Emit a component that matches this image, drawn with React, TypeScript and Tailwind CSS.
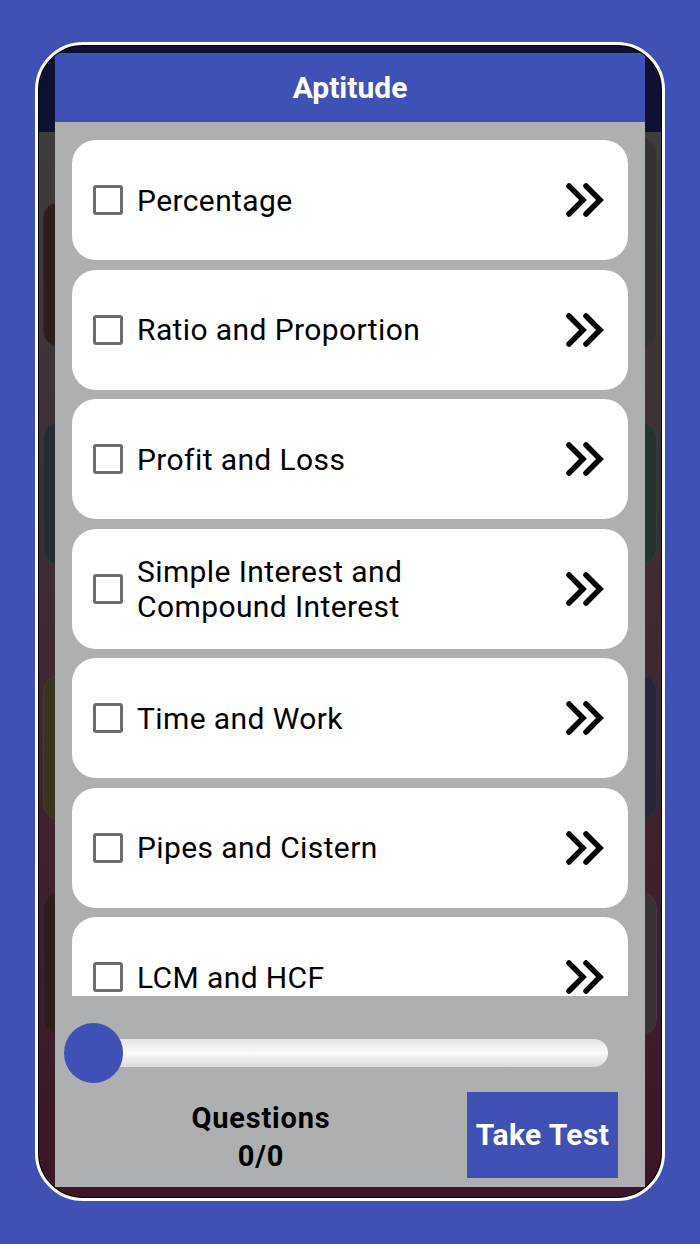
import React from "react";

const topics: string[][] = [
  ["Percentage"],
  ["Ratio and Proportion"],
  ["Profit and Loss"],
  ["Simple Interest and", "Compound Interest"],
  ["Time and Work"],
  ["Pipes and Cistern"],
  ["LCM and HCF"],
  ["Ages"],
];

function DoubleChevron() {
  return (
    <svg width="40" height="36" viewBox="0 0 40 36" fill="none" className="shrink-0">
      <polyline
        points="3,4 17,18 3,32"
        stroke="#000"
        strokeWidth="5.5"
        strokeLinecap="round"
        strokeLinejoin="miter"
      />
      <polyline
        points="20,4 34,18 20,32"
        stroke="#000"
        strokeWidth="5.5"
        strokeLinecap="round"
        strokeLinejoin="miter"
      />
    </svg>
  );
}

function TopicCard({ lines }: { lines: string[] }) {
  return (
    <div className="h-[120px] shrink-0 bg-white rounded-[24px] flex items-center pl-[21px] pr-[22px]">
      <div className="w-[30px] h-[30px] shrink-0 border-[3px] border-[#6d6d6d] rounded-[3px]" />
      <div className="ml-[14px] flex-1 text-[30px] leading-[35px] tracking-[0.4px] text-black">
        {lines.map((l) => (
          <div key={l} className="whitespace-nowrap">
            {l}
          </div>
        ))}
      </div>
      <DoubleChevron />
    </div>
  );
}

function BackdropScreen() {
  return (
    <div className="h-full flex flex-col">
      <div className="h-[86px] bg-[#0e1230]" />
      <div className="flex-1 bg-gradient-to-b from-[#3e3c3d] via-[#3f2831] to-[#3c1628] px-[4px]">
        <div className="flex justify-between">
          <div className="w-[280px] h-[145px] mt-[70px] rounded-[16px] bg-[#2f1d1c] border border-[#3a2624]" />
          <div className="w-[280px] h-[212px] mt-[5px] rounded-[16px] bg-[#353236] border border-[#3d3a3e]" />
        </div>
        <div className="flex justify-between mt-[73px]">
          <div className="w-[280px] h-[143px] rounded-[16px] bg-[#232c31] border border-[#2e393d]" />
          <div className="w-[280px] h-[143px] rounded-[16px] bg-[#243431] border border-[#2d403b]" />
        </div>
        <div className="flex justify-between mt-[110px]">
          <div className="w-[280px] h-[145px] rounded-[16px] bg-[#39331f] border border-[#453e27]" />
          <div className="w-[280px] h-[145px] rounded-[16px] bg-[#26263a] border border-[#303046]" />
        </div>
        <div className="flex justify-between mt-[72px]">
          <div className="w-[280px] h-[143px] rounded-[16px] bg-[#2e1d1c] border border-[#3a2725]" />
          <div className="w-[280px] h-[143px] rounded-[16px] bg-[#363236] border border-[#403c40]" />
        </div>
      </div>
    </div>
  );
}

export default function App() {
  return (
    <div
      className="w-[700px] h-[1244px] bg-[#3f51b5] flex justify-center pt-[42px]"
      style={{ fontFamily: "Roboto, 'Noto Sans', sans-serif" }}
    >
      <div className="w-[630px] h-[1159px] rounded-[48px] border-[3px] border-white bg-black p-[1px]">
        <div className="relative w-full h-full rounded-[44px] overflow-hidden">
          <BackdropScreen />

          {/* topic picker dialog */}
          <div className="absolute left-[16px] right-[16px] top-[7px] bottom-[10px] flex flex-col">
            <div className="h-[69px] bg-[#3f51b5] flex items-center justify-center">
              <span className="text-white font-bold text-[30px] leading-[36px]">Aptitude</span>
            </div>
            <div className="flex-1 bg-[#aeafb1] flex flex-col">
              <div className="h-[874px] overflow-hidden px-[17px] pt-[18px] flex flex-col gap-[9.5px]">
                {topics.map((t) => (
                  <TopicCard key={t.join(" ")} lines={t} />
                ))}
              </div>

              <div className="pt-[27px] pl-[9px] pr-[37px]">
                <div className="relative h-[60px] flex items-center">
                  <div className="w-full h-[28px] rounded-full bg-gradient-to-b from-[#e4e4e4] via-[#fbfbfb] to-[#dadada]" />
                  <div className="absolute left-0 top-0 w-[59px] h-[60px] rounded-full bg-[#3f51b5]" />
                </div>
              </div>

              <div className="flex items-center mt-[9px] h-[86px]">
                <div className="flex-1 flex flex-col items-center gap-[2px] pt-[3px] font-bold text-[29px] tracking-[0.8px] text-black">
                  <span className="leading-[36px]">Questions</span>
                  <span className="leading-[36px]">0/0</span>
                </div>
                <div className="w-[151px] h-[86px] mr-[27px] bg-[#3f51b5] flex items-center justify-center">
                  <span className="text-white font-bold text-[30px] leading-[36px] tracking-[0.4px] whitespace-nowrap">
                    Take Test
                  </span>
                </div>
              </div>
            </div>
          </div>
        </div>
      </div>
    </div>
  );
}
